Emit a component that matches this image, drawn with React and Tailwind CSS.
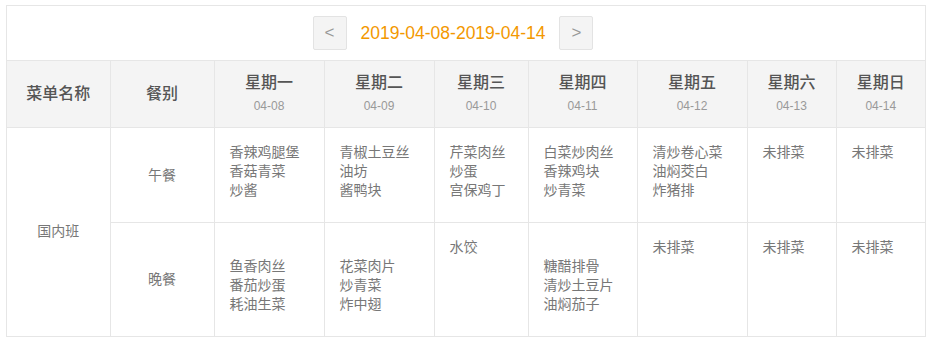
const days = [
  { name: "星期一", date: "04-08" },
  { name: "星期二", date: "04-09" },
  { name: "星期三", date: "04-10" },
  { name: "星期四", date: "04-11" },
  { name: "星期五", date: "04-12" },
  { name: "星期六", date: "04-13" },
  { name: "星期日", date: "04-14" },
];

const widths = [103, 104, 110, 110, 94, 109, 110, 89, 89];

const meals = [
  {
    name: "午餐",
    height: "h-[95px]",
    menus: [
      ["香辣鸡腿堡", "香菇青菜", "炒酱"],
      ["青椒土豆丝", "油坊", "酱鸭块"],
      ["芹菜肉丝", "炒蛋", "宫保鸡丁"],
      ["白菜炒肉丝", "香辣鸡块", "炒青菜"],
      ["清炒卷心菜", "油焖茭白", "炸猪排"],
      ["未排菜"],
      ["未排菜"],
    ],
  },
  {
    name: "晚餐",
    height: "h-[113px]",
    menus: [
      ["", "鱼香肉丝", "番茄炒蛋", "耗油生菜"],
      ["", "花菜肉片", "炒青菜", "炸中翅"],
      ["水饺"],
      ["", "糖醋排骨", "清炒土豆片", "油焖茄子"],
      ["未排菜"],
      ["未排菜"],
      ["未排菜"],
    ],
  },
];

function NavButton({ children }) {
  return (
    <button className="flex h-[34px] w-[34px] items-center justify-center rounded-[2px] border border-[#e3e3e3] bg-[#f4f4f4] text-[17px] text-[#999]">
      {children}
    </button>
  );
}

function App() {
  return (
    <div className="min-h-[346px] bg-white pt-[5px] pl-[6px] font-['Liberation_Sans','Noto_Sans_CJK_SC',sans-serif]">
      <div className="w-[920px] border border-[#e6e6e6]">
        <div className="flex h-[54px] items-center justify-center gap-[14px] pr-[26px]">
          <NavButton>&lt;</NavButton>
          <span className="text-[17.5px] text-[#f39800]">2019-04-08-2019-04-14</span>
          <NavButton>&gt;</NavButton>
        </div>
        <table className="w-full table-fixed border-collapse">
          <colgroup>
            {widths.map((w, i) => (
              <col key={i} style={{ width: w }} />
            ))}
          </colgroup>
          <thead>
            <tr className="h-[67px] bg-[#f4f4f4]">
              <th className="border-t border-r border-[#e6e6e6] text-[16px] font-medium text-[#555]">菜单名称</th>
              <th className="border-t border-x border-[#e6e6e6] text-[16px] font-medium text-[#555]">餐别</th>
              {days.map((d, i) => (
                <th
                  key={d.date}
                  className={`border-t border-l border-[#e6e6e6] font-medium ${i < 6 ? "border-r" : ""}`}
                >
                  <div className="text-[16px] leading-[24px] text-[#555]">{d.name}</div>
                  <div className="text-[12px] leading-[22px] font-normal text-[#999]">{d.date}</div>
                </th>
              ))}
            </tr>
          </thead>
          <tbody className="text-[14px] text-[#777]">
            {meals.map((meal, r) => (
              <tr key={meal.name} className={meal.height}>
                {r === 0 && (
                  <td rowSpan={2} className="border-t border-r border-[#e6e6e6] text-center align-middle">
                    国内班
                  </td>
                )}
                <td className="border-t border-x border-[#e6e6e6] text-center align-middle">{meal.name}</td>
                {meal.menus.map((lines, i) => (
                  <td
                    key={i}
                    className={`border-t border-l border-[#e6e6e6] px-[15px] pt-[15px] align-top leading-[19px] ${i < 6 ? "border-r" : ""}`}
                  >
                    {lines.map((line, j) => (
                      <div key={j} className="h-[19px] whitespace-nowrap">
                        {line}
                      </div>
                    ))}
                  </td>
                ))}
              </tr>
            ))}
          </tbody>
        </table>
      </div>
    </div>
  );
}

export default App;
